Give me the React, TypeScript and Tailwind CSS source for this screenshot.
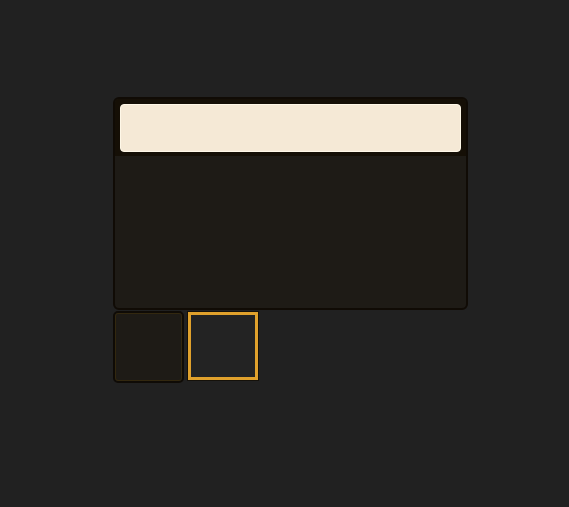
export default function App() {
  return (
    <div className="min-h-[507px] w-full bg-[#212121] pl-[113px] pt-[97px]">
      <div className="flex w-[355px] flex-col">
        <div className="flex h-[213px] flex-col overflow-hidden rounded-[6px] border-2 border-[#100b05] bg-[#1e1b16]">
          <div className="bg-[#150f06] px-[5px] pt-[5px] pb-[4px]">
            <div className="h-[48px] rounded-[4px] border border-[#fff8e8] bg-[#f5e9d6]" />
          </div>
        </div>
        <div className="mt-[1px] flex gap-[3px]">
          <div className="h-[72px] w-[71px] rounded-[5px] border-2 border-[#0f0b06] bg-[#1e1b16]">
            <div className="h-full w-full rounded-[3px] border border-[#33280f]" />
          </div>
          <div className="h-[70px] w-[72px] border border-[#15110a] bg-[#232323]">
            <div className="h-full w-full border-[3px] border-[#e0a12c] bg-[#232323]" />
          </div>
        </div>
      </div>
    </div>
  )
}
